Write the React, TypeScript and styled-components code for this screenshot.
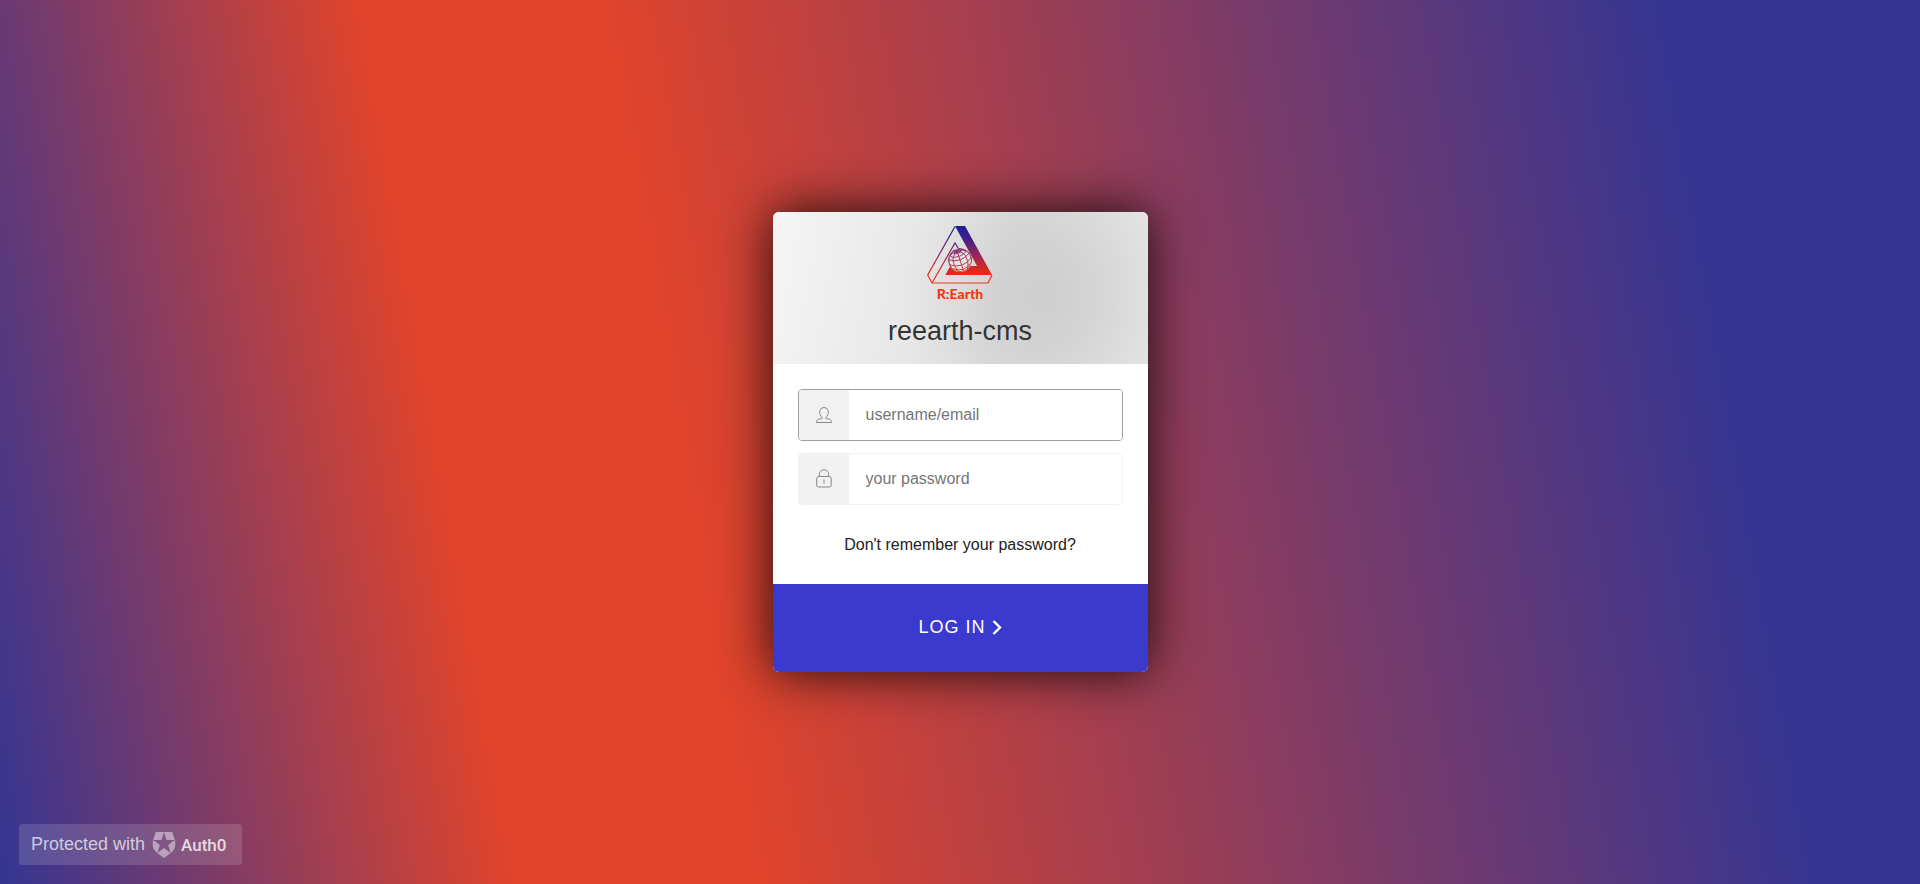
import React from "react";
import styled, { createGlobalStyle } from "styled-components";

const GlobalStyle = createGlobalStyle`
  *, *::before, *::after { box-sizing: border-box; }
  body { margin: 0; font-family: "Liberation Sans", Arial, sans-serif; }
`;

const Page = styled.main`
  position: relative;
  display: flex;
  align-items: center;
  justify-content: center;
  min-height: 100vh;
  background: linear-gradient(80deg, #343593, #e2442a 25%, #e2442a 36%, #343593 88%);
`;

const Card = styled.form`
  width: 375px;
  border-radius: 6px;
  overflow: hidden;
  background: #fff;
  box-shadow: 0 0 50px rgba(0, 0, 0, 0.85);
`;

const Header = styled.header`
  display: flex;
  flex-direction: column;
  align-items: center;
  gap: 14px;
  height: 152px;
  padding-top: 14px;
  background:
    radial-gradient(ellipse 150px 170px at 74% 56%, rgba(0, 0, 0, 0.09), rgba(0, 0, 0, 0.07) 30%, rgba(0, 0, 0, 0.02) 75%, transparent),
    linear-gradient(100deg, #f5f5f5, #ececec 25%, #e0e0e0 60%, #e6e8e7);
`;

const Title = styled.h1`
  margin: 0;
  font-size: 27px;
  font-weight: 400;
  line-height: 32px;
  color: #333;
`;

const Body = styled.div`
  display: flex;
  flex-direction: column;
  gap: 12px;
  padding: 25px;
`;

const Field = styled.label<{ $active?: boolean }>`
  display: flex;
  height: 52px;
  border: 1px solid ${(p) => (p.$active ? "#a0a0a4" : "#f1f1f1")};
  border-radius: 4px;
  overflow: hidden;
`;

const FieldIcon = styled.span`
  display: flex;
  flex: 0 0 50px;
  align-items: center;
  justify-content: center;
  background: #f1f1f1;
`;

const Input = styled.input`
  flex: 1;
  min-width: 0;
  padding: 0 17px;
  border: 0;
  outline: 0;
  background: #fff;
  font: 16px "Liberation Sans", Arial, sans-serif;
  color: #333;
  &::placeholder { color: #757575; }
`;

const ForgotLink = styled.a`
  align-self: center;
  margin: 18px 0 4px;
  font-size: 16px;
  line-height: 20px;
  color: #222;
  text-decoration: none;
`;

const Submit = styled.button`
  display: flex;
  align-items: center;
  justify-content: center;
  gap: 6px;
  width: 100%;
  height: 88px;
  padding: 0 0 2px;
  border: 0;
  background: #3a3ace;
  color: #fff;
  font: 18px "Liberation Sans", Arial, sans-serif;
  letter-spacing: 1px;
  cursor: pointer;
`;

const Badge = styled.a`
  position: absolute;
  left: 19px;
  bottom: 19px;
  display: flex;
  align-items: center;
  height: 41px;
  padding: 0 16px 0 12px;
  border-radius: 3px;
  background: rgba(255, 255, 255, 0.14);
  color: rgba(255, 255, 255, 0.7);
  font-size: 18px;
  text-decoration: none;
`;

const BadgeShield = styled.svg`
  margin: 0 4px 0 6px;
  opacity: 0.65;
`;

const BadgeName = styled.span`
  color: rgba(255, 255, 255, 0.8);
  font-family: Roboto, sans-serif;
  font-size: 17px;
  font-weight: 500;
`;

const Logo = () => (
  <svg width="66" height="75" viewBox="0 0 66 75" role="img" aria-label="R:Earth">
    <defs>
      <linearGradient id="brand" x1="0" y1="0" x2="0" y2="58" gradientUnits="userSpaceOnUse">
        <stop offset="0" stopColor="#1e1e96" />
        <stop offset="0.2" stopColor="#3c1e8c" />
        <stop offset="0.55" stopColor="#a52850" />
        <stop offset="0.8" stopColor="#e62814" />
        <stop offset="1" stopColor="#f03c14" />
      </linearGradient>
      <clipPath id="sphere">
        <circle cx="33" cy="34" r="12" />
      </clipPath>
    </defs>
    <path d="M28 0H38L65 49H18.300L26 35L29 40H50Z" fill="url(#brand)" />
    <g fill="none" stroke="url(#brand)" strokeWidth="1.200">
      <path d="M28 .5L.7 49L5 57H61L65 49" />
      <path d="M5 57L28 17L34 27" />
    </g>
    <circle cx="33" cy="34" r="12" fill="#e4e2e2" />
    <g fill="none" stroke="url(#brand)" strokeWidth="0.800" clipPath="url(#sphere)">
      <circle cx="33" cy="34" r="11.600" />
      <g transform="rotate(-18 33 34)">
        <path d="M33 25.500V46M33 25.500C24 27 25 40 29 45.500M33 25.500C42 27 41 40 37 45.500M33 25.500C22 24 20 33 23 41M33 25.500C44 24 46 33 43 41M33 25.500L29 22M33 25.500L37 22" />
        <ellipse cx="33" cy="25.500" rx="3.500" ry="1.500" />
        <ellipse cx="33" cy="27" rx="8" ry="3.200" />
        <path d="M21 29.500Q33 38.500 45 29.500M21 35Q33 44 45 35M24 40.500Q33 47 42 40.500" />
      </g>
    </g>
    <text x="33" y="73" textAnchor="middle" fontFamily="Lato, sans-serif" fontWeight="900" fontSize="14" fill="#f5360f">R:Earth</text>
  </svg>
);

export default function App() {
  return (
    <>
      <GlobalStyle />
      <Page>
        <Card onSubmit={(e) => e.preventDefault()}>
          <Header>
            <Logo />
            <Title>reearth-cms</Title>
          </Header>
          <Body>
            <Field $active>
              <FieldIcon>
                <svg width="16" height="17" viewBox="0 0 16 17" fill="none" stroke="#888" aria-hidden="true">
                  <path d="M6 10.300C4.500 9 3.700 7 3.700 4.900C3.700 2.300 5.400 .6 8 .6S12.300 2.300 12.300 4.900C12.300 7 11.500 9 10 10.300V11.600L13.500 12.200C15 12.600 15.400 13.500 15.400 15.500H.6C.6 13.500 1 12.600 2.500 12.200L6 11.600Z" />
                </svg>
              </FieldIcon>
              <Input type="text" aria-label="username/email" placeholder="username/email" />
            </Field>
            <Field>
              <FieldIcon>
                <svg width="16" height="20" viewBox="0 0 16 20" fill="none" stroke="#888" aria-hidden="true">
                  <rect x="0.700" y="7.500" width="14.500" height="10.500" rx="2" />
                  <path d="M3.300 7.500V5.400a4.700 4.700 0 0 1 9.400 0V7.500M8 10.500V14.500" />
                </svg>
              </FieldIcon>
              <Input type="password" aria-label="your password" placeholder="your password" />
            </Field>
            <ForgotLink href="#forgot">Don't remember your password?</ForgotLink>
          </Body>
          <Submit type="submit">
            LOG IN
            <svg width="10" height="15" viewBox="0 0 10 15" fill="none" stroke="#fff" strokeWidth="2.400" aria-hidden="true">
              <path d="M1.500 1L8 7.500L1.500 14" />
            </svg>
          </Submit>
        </Card>
        <Badge href="#auth0">
          Protected with
          <BadgeShield width="26" height="26" viewBox="0 0 24 24" fill="currentColor" aria-hidden="true">
            <path d="M21.980 7.448L19.620 0H4.347L2.020 7.448c-1.352 4.312.03 9.206 3.815 12.015L12.007 24l6.157-4.552c3.755-2.810 5.182-7.688 3.815-12.015l-6.160 4.580 2.343 7.450-6.157-4.597-6.158 4.580 2.358-7.433-6.188-4.550 7.630-.045L12.008 0l2.356 7.404 7.615.044z" />
          </BadgeShield>
          <BadgeName>Auth0</BadgeName>
        </Badge>
      </Page>
    </>
  );
}
